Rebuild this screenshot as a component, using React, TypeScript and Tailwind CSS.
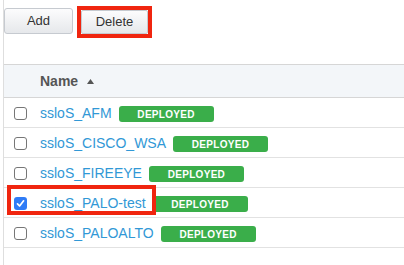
const rows = [
  { name: "ssloS_AFM", checked: false },
  { name: "ssloS_CISCO_WSA", checked: false },
  { name: "ssloS_FIREEYE", checked: false },
  { name: "ssloS_PALO-test", checked: true, marked: true },
  { name: "ssloS_PALOALTO", checked: false },
];

function Checkbox({ checked }: { checked: boolean }) {
  if (checked) {
    return (
      <span className="flex h-[13px] w-[13px] shrink-0 items-center justify-center rounded-[3px] bg-[#2f7cf6]">
        <svg width="9" height="9" viewBox="0 0 9 9">
          <path d="M1.5 4.8 L3.6 7 L7.6 1.8" fill="none" stroke="#fff" strokeWidth="1.7" strokeLinecap="round" strokeLinejoin="round" />
        </svg>
      </span>
    );
  }
  return <span className="h-[13px] w-[13px] shrink-0 rounded-[3px] border border-[#767676] bg-white" />;
}

function Badge() {
  return (
    <span className="ml-[7px] mt-[2px] flex h-[16px] w-[95px] items-center justify-center rounded-[3px] bg-[#3aae4a] text-[10px] font-bold tracking-[0.3px] text-white">
      DEPLOYED
    </span>
  );
}

export default function App() {
  return (
    <div className="h-[265px] w-[404px] overflow-hidden bg-white font-['Liberation_Sans',Arial,sans-serif]">
      <div className="ml-[3px] h-full border-l border-[#dedede]">
        <div className="flex items-start gap-[4px] pt-[6px]">
          <button className="mt-[2px] h-[26px] w-[69px] rounded-[3px] border border-[#c6cad0] bg-gradient-to-b from-[#fcfcfd] to-[#e6e8eb] text-[13px] text-[#333]">
            Add
          </button>
          <div className="border-[4px] border-[#f0250f]">
            <button className="block h-[24px] w-[67px] rounded-[2px] border border-[#c6cad0] bg-gradient-to-b from-[#fcfcfd] to-[#e6e8eb] text-[13px] text-[#333]">
              Delete
            </button>
          </div>
        </div>

        <div className="mt-[26px]">
          <div className="flex h-[34px] items-center border-y border-[#d6d6d6] bg-[#f3f6f9] pl-[36px] text-[14px] font-bold text-[#555]">
            Name
            <svg className="ml-[9px]" width="7" height="5" viewBox="0 0 7 5">
              <path d="M0 5 L3.5 0 L7 5 Z" fill="#555" />
            </svg>
          </div>
          {rows.map((r) => (
            <div key={r.name} className="relative flex h-[30px] items-center border-b border-[#e2e2e2] pl-[10px] pt-[1px]">
              <Checkbox checked={r.checked} />
              <a className="ml-[13px] text-[14px] text-[#3198d6]">{r.name}</a>
              <Badge />
              {r.marked && (
                <span className="pointer-events-none absolute left-[3px] top-[-3px] h-[30px] w-[149px] border-[4px] border-[#f0250f]" />
              )}
            </div>
          ))}
        </div>
      </div>
    </div>
  );
}
